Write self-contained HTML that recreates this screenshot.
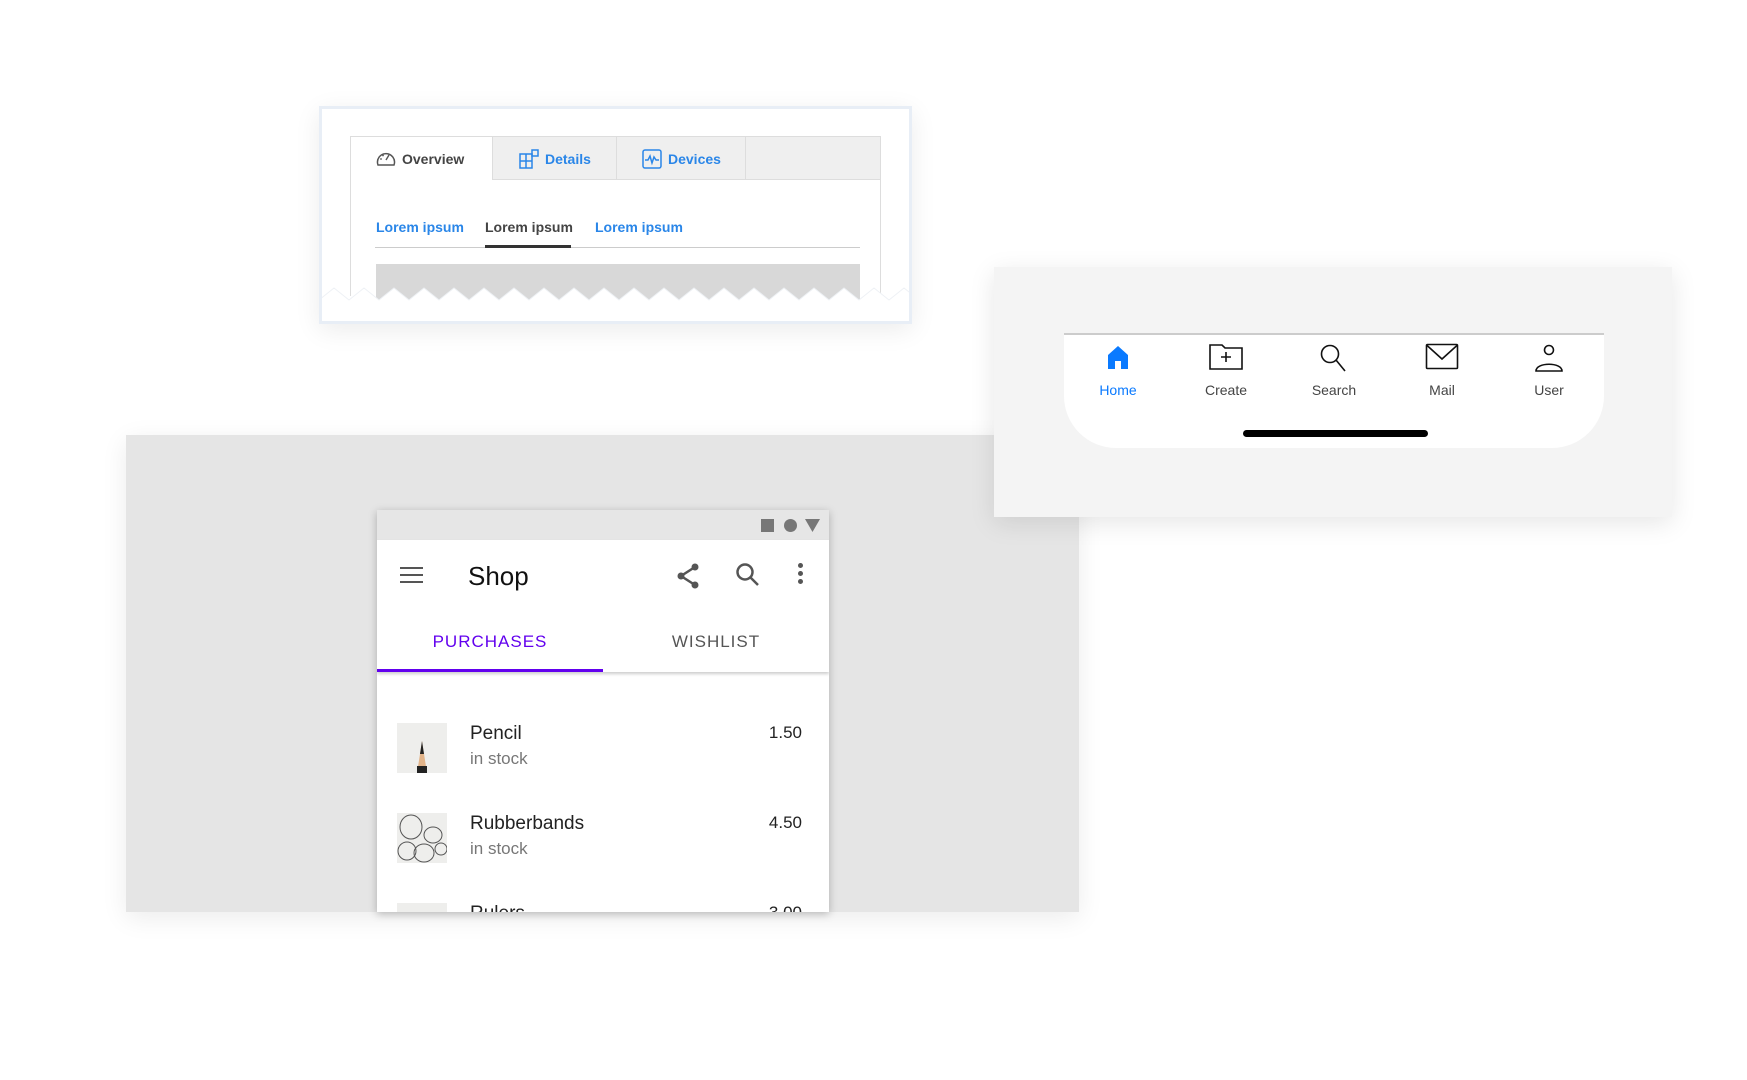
<!DOCTYPE html>
<html><head><meta charset="utf-8"><style>
*{box-sizing:border-box;margin:0;padding:0}
body{width:1747px;height:1080px;background:#fff;position:relative;overflow:hidden;font-family:"Liberation Sans",sans-serif}
.abs{position:absolute}
</style></head><body>

<!-- Card 1 -->
<div class="abs" style="left:319px;top:106px;width:593px;height:218px;background:#fff;border:3px solid #e8eef6;box-shadow:0 6px 24px rgba(0,0,0,0.08)"></div>
<div class="abs" style="left:350px;top:136px;width:531px;height:160px;border:1px solid #ddd;border-bottom:none;background:#fff"></div>
<div class="abs" style="left:492px;top:137px;width:388px;height:43px;background:#efefef;border-bottom:1px solid #ddd;border-left:1px solid #ddd"></div>
<div class="abs" style="left:616px;top:137px;width:1px;height:43px;background:#ddd"></div>
<div class="abs" style="left:745px;top:137px;width:1px;height:43px;background:#ddd"></div>
<div class="abs" style="left:375px;top:149px;height:20px;display:flex;align-items:center;font-size:14px;font-weight:bold;color:#444">
<svg width="22" height="20" viewBox="0 0 22 20" style="margin-right:5px"><path d="M3 16 A8.5 8.5 0 1 1 19 16 Z" fill="none" stroke="#555" stroke-width="1.5"/><path d="M11 11 L14 6" stroke="#555" stroke-width="1.4"/><circle cx="6" cy="10" r="0.9" fill="#555"/><circle cx="8" cy="6.5" r="0.9" fill="#555"/></svg>Overview</div>
<div class="abs" style="left:519px;top:149px;height:20px;display:flex;align-items:center;font-size:14px;font-weight:bold;color:#2a86e8">
<svg width="21" height="20" viewBox="0 0 21 20" style="margin-right:5px" fill="none" stroke="#2a86e8" stroke-width="1.5"><rect x="1" y="5" width="12" height="14"/><path d="M1 12h12M7 5v14"/><rect x="13" y="1" width="6" height="6"/></svg>Details</div>
<div class="abs" style="left:642px;top:149px;height:20px;display:flex;align-items:center;font-size:14px;font-weight:bold;color:#2a86e8">
<svg width="20" height="20" viewBox="0 0 20 20" style="margin-right:6px" fill="none" stroke="#2a86e8" stroke-width="1.5"><rect x="1" y="1" width="18" height="18" rx="2"/><path d="M3 11h3l2-4 2 7 2-6 2 3h3"/></svg>Devices</div>
<div class="abs" style="left:376px;top:219px;font-size:14px;font-weight:bold;color:#2a86e8">Lorem ipsum</div>
<div class="abs" style="left:485px;top:219px;font-size:14px;font-weight:bold;color:#444">Lorem ipsum</div>
<div class="abs" style="left:595px;top:219px;font-size:14px;font-weight:bold;color:#2a86e8">Lorem ipsum</div>
<div class="abs" style="left:375px;top:247px;width:485px;height:1px;background:#ccc"></div>
<div class="abs" style="left:485px;top:245px;width:86px;height:3px;background:#333"></div>
<svg class="abs" style="left:319px;top:264px" width="593" height="60" viewBox="0 0 593 60">
<rect x="57" y="0" width="484" height="38" fill="#d8d8d8"/>
<path d="M0 36 L15 24 L30 36 L45 24 L60 36 L75 24 L90 36 L105 24 L120 36 L135 24 L150 36 L165 24 L180 36 L195 24 L210 36 L225 24 L240 36 L255 24 L270 36 L285 24 L300 36 L315 24 L330 36 L345 24 L360 36 L375 24 L390 36 L405 24 L420 36 L435 24 L450 36 L465 24 L480 36 L495 24 L510 36 L525 24 L540 36 L555 24 L570 36 L585 24 L600 36 L600 60 L0 60 Z" fill="#fff" stroke="#eef1f5" stroke-width="1"/>
<rect x="0" y="57" width="593" height="3" fill="#e8eef6"/>
<rect x="0" y="0" width="3" height="60" fill="#e8eef6"/><rect x="590" y="0" width="3" height="60" fill="#e8eef6"/>
</svg>

<!-- gray bg -->
<div class="abs" style="left:126px;top:435px;width:953px;height:477px;background:#e5e5e5;box-shadow:0 6px 24px rgba(0,0,0,0.08)"></div>

<!-- Card 2 -->
<div class="abs" style="left:994px;top:267px;width:678px;height:250px;background:#f4f4f4;box-shadow:0 6px 24px rgba(0,0,0,0.1)"></div>
<div class="abs" style="left:1064px;top:333px;width:540px;height:115px;background:#fff;border-top:2px solid #ccc;border-radius:0 0 52px 52px"></div>
<div class="abs" style="left:1243px;top:430px;width:185px;height:7px;background:#000;border-radius:4px"></div>
<svg class="abs" style="left:1104px;top:343px" width="28" height="28" viewBox="0 0 28 28"><path d="M4 26 V12 L14 3 L24 12 V26 H17 V18 H11 V26 Z" fill="#0a7aff"/></svg>
<svg class="abs" style="left:1208px;top:343px" width="36" height="28" viewBox="0 0 36 28" fill="none" stroke="#111" stroke-width="1.6"><path d="M2 2 H14 L17 5 H34 V26 H2 Z"/><path d="M18 9 V19 M13 14 H23"/></svg>
<svg class="abs" style="left:1319px;top:343px" width="30" height="30" viewBox="0 0 30 30" fill="none" stroke="#111" stroke-width="1.6"><circle cx="11" cy="11" r="8.5"/><path d="M17 17 L26 28"/></svg>
<svg class="abs" style="left:1425px;top:343px" width="34" height="27" viewBox="0 0 34 27" fill="none" stroke="#111" stroke-width="1.6"><rect x="1.5" y="1.5" width="31" height="24" rx="1"/><path d="M1.5 2 L17 16 L32.5 2"/></svg>
<svg class="abs" style="left:1534px;top:343px" width="30" height="30" viewBox="0 0 30 30" fill="none" stroke="#111" stroke-width="1.6"><circle cx="15" cy="7" r="4.5"/><path d="M2 28 C2 19 28 19 28 28 Z"/></svg>
<div class="abs" style="left:1078px;top:382px;width:80px;text-align:center;font-size:14px;color:#0a7aff">Home</div>
<div class="abs" style="left:1186px;top:382px;width:80px;text-align:center;font-size:14px;color:#444">Create</div>
<div class="abs" style="left:1294px;top:382px;width:80px;text-align:center;font-size:14px;color:#444">Search</div>
<div class="abs" style="left:1402px;top:382px;width:80px;text-align:center;font-size:14px;color:#444">Mail</div>
<div class="abs" style="left:1509px;top:382px;width:80px;text-align:center;font-size:14px;color:#444">User</div>

<!-- Phone -->
<div class="abs" style="left:377px;top:510px;width:452px;height:402px;background:#fff;box-shadow:0 2px 8px rgba(0,0,0,0.25);overflow:hidden">
  <div style="height:30px;background:#e6e6e6;position:relative">
    <div class="abs" style="left:384px;top:9px;width:13px;height:13px;background:#777"></div>
    <div class="abs" style="left:407px;top:9px;width:13px;height:13px;background:#777;border-radius:50%"></div>
    <svg class="abs" style="left:428px;top:9px" width="15" height="13"><path d="M0 0 H15 L7.5 13 Z" fill="#777"/></svg>
  </div>
  <div style="position:relative;height:132px;box-shadow:0 2px 3px rgba(0,0,0,0.2)">
    <div class="abs" style="left:23px;top:27px;width:23px;height:2px;background:#555;box-shadow:0 7px 0 #555,0 14px 0 #555"></div>
    <div class="abs" style="left:91px;top:21px;font-size:26px;color:#111">Shop</div>
    <svg class="abs" style="left:298px;top:22px" width="26" height="28" viewBox="0 0 26 28"><path d="M20 5 L6 14 L20 23" stroke="#555" stroke-width="2.5" fill="none"/><circle cx="20" cy="5" r="3.5" fill="#555"/><circle cx="6" cy="14" r="3.5" fill="#555"/><circle cx="20" cy="23" r="3.5" fill="#555"/></svg>
    <svg class="abs" style="left:358px;top:22px" width="26" height="26" viewBox="0 0 26 26" fill="none" stroke="#555" stroke-width="2.5"><circle cx="10" cy="10" r="7.5"/><path d="M15.5 15.5 L23 23"/></svg>
    <div class="abs" style="left:421px;top:23px;width:5px;height:5px;border-radius:50%;background:#555;box-shadow:0 8px 0 #555,0 16px 0 #555"></div>
    <div class="abs" style="left:0;top:92px;width:226px;text-align:center;font-size:17px;letter-spacing:1px;color:#6200ee">PURCHASES</div>
    <div class="abs" style="left:226px;top:92px;width:226px;text-align:center;font-size:17px;letter-spacing:1px;color:#555">WISHLIST</div>
    <div class="abs" style="left:0;top:129px;width:226px;height:3px;background:#6200ee"></div>
  </div>
  <div class="abs" style="left:20px;top:213px;width:50px;height:50px;background:#eeeeec;overflow:hidden">
    <svg width="50" height="50"><path d="M20 50 L25 18 L30 50 Z" fill="#e2b48a"/><path d="M23 31 L25 18 L27 31 Z" fill="#222"/><path d="M20 43 H30 V50 H20Z" fill="#222"/></svg>
  </div>
  <div class="abs" style="left:93px;top:213px;font-size:19px;color:#222">Pencil</div>
  <div class="abs" style="left:93px;top:239px;font-size:17px;color:#777">in stock</div>
  <div class="abs" style="right:27px;top:213px;font-size:17px;color:#222">1.50</div>
  <div class="abs" style="left:20px;top:303px;width:50px;height:50px;background:#eeeeec;overflow:hidden">
    <svg width="50" height="50" fill="none" stroke="#555" stroke-width="1"><ellipse cx="14" cy="14" rx="11" ry="12"/><ellipse cx="36" cy="22" rx="9" ry="8"/><ellipse cx="10" cy="38" rx="9" ry="9"/><ellipse cx="27" cy="40" rx="10" ry="9"/><ellipse cx="44" cy="36" rx="6" ry="6"/></svg>
  </div>
  <div class="abs" style="left:93px;top:303px;font-size:19px;color:#222">Rubberbands</div>
  <div class="abs" style="left:93px;top:329px;font-size:17px;color:#777">in stock</div>
  <div class="abs" style="right:27px;top:303px;font-size:17px;color:#222">4.50</div>
  <div class="abs" style="left:20px;top:393px;width:50px;height:50px;background:#eeeeec"></div>
  <div class="abs" style="left:93px;top:393px;font-size:19px;color:#222">Rulers</div>
  <div class="abs" style="right:27px;top:393px;font-size:17px;color:#222">3.00</div>
</div>
</body></html>
